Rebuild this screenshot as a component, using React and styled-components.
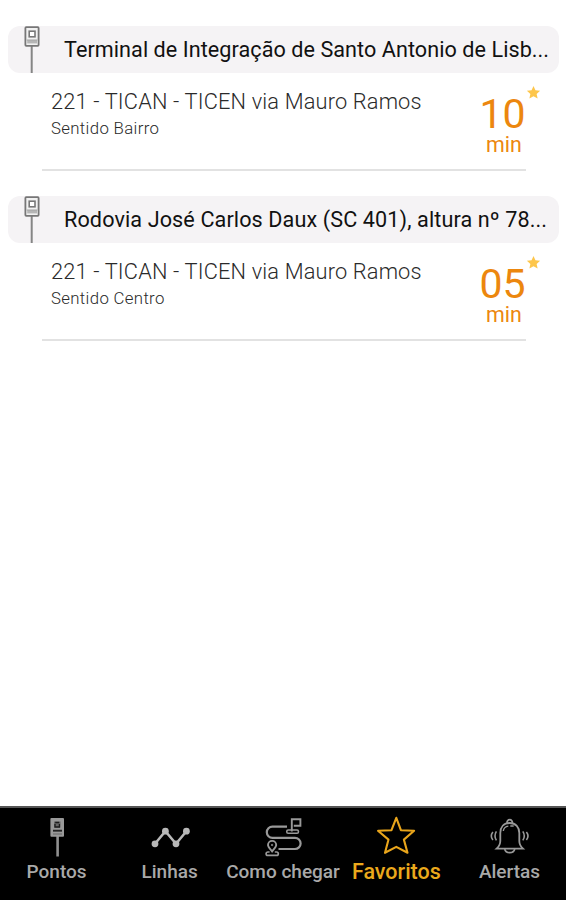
import * as React from 'react';
import styled, { createGlobalStyle } from 'styled-components';

const GlobalStyle = createGlobalStyle`
  * {
    box-sizing: border-box;
  }

  body {
    margin: 0;
    background: #fff;
    font-family: Roboto, 'Liberation Sans', sans-serif;
  }
`;

const Screen = styled.div`
  display: flex;
  flex-direction: column;
  width: 566px;
  height: 900px;
  overflow: hidden;
  background: #fff;
`;

const List = styled.main`
  flex: 1;
  padding: 26px 7px 0 8px;
`;

const Stop = styled.section`
  height: 170.3px;
`;

const StopHeader = styled.header`
  display: flex;
  align-items: flex-start;
  height: 47px;
  padding-left: 16px;
  border-radius: 12px;
  background: #f5f3f5;
`;

const StopName = styled.h2`
  margin: 0 0 0 24px;
  font-size: 21.6px;
  font-weight: 400;
  line-height: 47px;
  letter-spacing: ${(props) => props.$spacing};
  white-space: nowrap;
  color: #111;
`;

const Line = styled.div`
  display: flex;
  justify-content: space-between;
  height: 98px;
  margin: 0 33px 0 34px;
  padding-left: 9px;
  border-bottom: 2px solid #e2e2e2;
`;

const LineInfo = styled.div`
  padding-top: 16px;
  color: #2a2a2a;
`;

const LineName = styled.div`
  font-size: 21.8px;
  font-weight: 350;
  line-height: 26px;
  letter-spacing: 0.16px;
  white-space: nowrap;
`;

const Direction = styled.div`
  font-size: 16.8px;
  font-weight: 350;
  line-height: 20px;
  letter-spacing: 0.34px;
  margin-top: 3px;
`;

const Arrival = styled.div`
  position: relative;
  width: 44px;
  padding-top: 21px;
  text-align: center;
  color: #ec870e;
`;

const Minutes = styled.div`
  margin: 0 -2px 0 -5px;
  font-size: 41px;
  line-height: 41px;
`;

const Unit = styled.div`
  font-size: 21.4px;
  line-height: 20px;
`;

const FavoriteMark = styled.svg`
  position: absolute;
  top: 12px;
  right: -15px;
  width: 15px;
  height: 15px;
  fill: #fdc64b;
`;

const NavBar = styled.nav`
  display: grid;
  grid-template-columns: repeat(5, 1fr);
  height: 94px;
  border-top: 2px solid #555;
  background: #000;
`;

const NavItem = styled.div`
  display: flex;
  flex-direction: column;
  align-items: center;
  padding-top: 8px;
  color: ${(props) => (props.$active ? '#eba91c' : '#a9a9a9')};

  svg {
    flex: none;
  }
`;

const NavLabel = styled.span`
  font-size: ${(props) => (props.$active ? '21.5px' : '19px')};
  font-weight: 500;
  line-height: 24px;
  margin-top: 1px;
  white-space: nowrap;
`;

const StopSign = () => (
  <svg width="16" height="47" viewBox="0 0 16 47" fill="none">
    <path d="M7.7 20V47" stroke="#858585" strokeWidth="2" />
    <rect x="1.4" y="1.2" width="13.2" height="18.6" rx="0.8" fill="#f1f1f1" stroke="#777" strokeWidth="1.8" />
    <rect x="5.2" y="5.2" width="5.8" height="5.6" fill="#fff" stroke="#777" strokeWidth="1.6" />
    <path d="M3.2 15.8H13" stroke="#b5b5b5" strokeWidth="3.2" />
    <path d="M2.7 14H13.4" stroke="#909090" strokeWidth="0.8" />
  </svg>
);

const StopsIcon = () => (
  <svg width="40" height="43" viewBox="0 0 40 43" fill="none">
    <path d="M20.6 20V40.5" stroke="#909090" strokeWidth="2.6" />
    <rect x="13.4" y="2" width="13.6" height="18.8" rx="1" fill="#999" />
    <path d="M17 5.5h6.5v6H17z" fill="#666" />
    <path d="M18.2 6.5h4M18 8v3h4.4V8" stroke="#1c1c1c" strokeWidth="1.3" />
    <path d="M16 14.7h9" stroke="#222" strokeWidth="1.9" />
    <path d="M16 18h9" stroke="#666" strokeWidth="1" />
  </svg>
);

const LinesIcon = () => (
  <svg width="42" height="43" viewBox="0 0 42 43" fill="none">
    <path d="M6 27.8 16.4 15.2 27 27.8 37.4 15.2" stroke="#b8b8b8" strokeWidth="2.5" />
    <g fill="#b8b8b8">
      <circle cx="6" cy="27.8" r="3.4" />
      <circle cx="16.4" cy="15.2" r="3.4" />
      <circle cx="27" cy="27.8" r="3.4" />
      <circle cx="37.4" cy="15.2" r="3.4" />
    </g>
  </svg>
);

const RouteIcon = () => (
  <svg width="40" height="43" viewBox="0 0 40 43" fill="none" stroke="#999" strokeWidth="1.9">
    <path d="M24 10.6H9.4a5.4 5.4 0 0 0 0 11.2H32a5.4 5.4 0 0 1 0 11.2H15.5" strokeWidth="2.2" />
    <path d="M28.8 15.5V3.2h8.6v6.6h-6.6" />
    <rect x="23.8" y="14" width="11.6" height="3.2" rx="1.3" strokeWidth="1.6" />
    <path d="M9.1 35.4C6.6 32.4 5 30.8 5 29a4.1 4.1 0 0 1 8.2 0c0 1.8-1.6 3.4-4.1 6.4Z" />
    <circle cx="9.1" cy="29" r="0.7" strokeWidth="1" />
    <path d="M6.6 36H4.8a1.7 1.7 0 0 0 0 3.4h8.8a1.7 1.7 0 0 0 0-3.4h-1.8" strokeWidth="1.7" />
  </svg>
);

const StarIcon = () => (
  <svg width="42" height="43" viewBox="0 0 42 43" fill="none">
    <path
      d="M21.3 1.8 25.9 14.2 39.1 14.8 28.9 23.6 32.5 36.8 21.3 30.9 10 36.8 13.5 23.6 3 14.8 16.5 14.2Z"
      stroke="#e9a51b"
      strokeWidth="2.1"
      strokeLinejoin="round"
    />
  </svg>
);

const BellIcon = () => (
  <svg width="42" height="43" viewBox="0 0 42 43" fill="none" stroke="#999" strokeWidth="1.8">
    <path d="M19.2 7a2.6 2.6 0 1 1 5 0" />
    <path d="M21.7 7c-6 0-9.4 4.2-9.4 10v7.9c0 3.3-1.2 5.4-3.7 7.7H35c-2.5-2.3-3.7-4.4-3.7-7.7V17c0-5.8-3.5-10-9.6-10Z" />
    <path d="M15.3 15c.4-2.7 2.4-4.6 5-4.9M22.3 10h3.4" strokeWidth="1.4" />
    <path d="M16.7 33.1c1 4.7 9 4.7 10 0" />
    <path d="M8.4 15.4q-2.8 4.5 0 9M4.9 16q-3.2 4 0 8M34.8 15.4q3 4.5 0 9M38.4 16q3.2 4 0 8" strokeWidth="1.6" />
  </svg>
);

const stops = [
  {
    name: 'Terminal de Integração de Santo Antonio de Lisb...',
    spacing: '0.06px',
    direction: 'Sentido Bairro',
    minutes: '10',
  },
  {
    name: 'Rodovia José Carlos Daux (SC 401), altura nº 78...',
    spacing: '0.11px',
    direction: 'Sentido Centro',
    minutes: '05',
  },
];

const navItems = [
  { label: 'Pontos', Icon: StopsIcon },
  { label: 'Linhas', Icon: LinesIcon },
  { label: 'Como chegar', Icon: RouteIcon },
  { label: 'Favoritos', Icon: StarIcon, active: true },
  { label: 'Alertas', Icon: BellIcon },
];

const App = () => (
  <>
    <GlobalStyle />
    <Screen>
      <List>
        {stops.map((stop) => (
          <Stop key={stop.name}>
            <StopHeader>
              <StopSign />
              <StopName $spacing={stop.spacing}>{stop.name}</StopName>
            </StopHeader>
            <Line>
              <LineInfo>
                <LineName>221 - TICAN - TICEN via Mauro Ramos</LineName>
                <Direction>{stop.direction}</Direction>
              </LineInfo>
              <Arrival>
                <Minutes>{stop.minutes}</Minutes>
                <Unit>min</Unit>
                <FavoriteMark viewBox="0 0 24 24">
                  <path d="M12 1.5l3.1 6.9 7.5.8-5.6 5 1.6 7.4-6.6-3.8-6.6 3.8L7 14.2l-5.6-5 7.5-.8z" />
                </FavoriteMark>
              </Arrival>
            </Line>
          </Stop>
        ))}
      </List>
      <NavBar>
        {navItems.map(({ label, Icon, active }) => (
          <NavItem key={label} $active={active}>
            <Icon />
            <NavLabel $active={active}>{label}</NavLabel>
          </NavItem>
        ))}
      </NavBar>
    </Screen>
  </>
);

export default App;
